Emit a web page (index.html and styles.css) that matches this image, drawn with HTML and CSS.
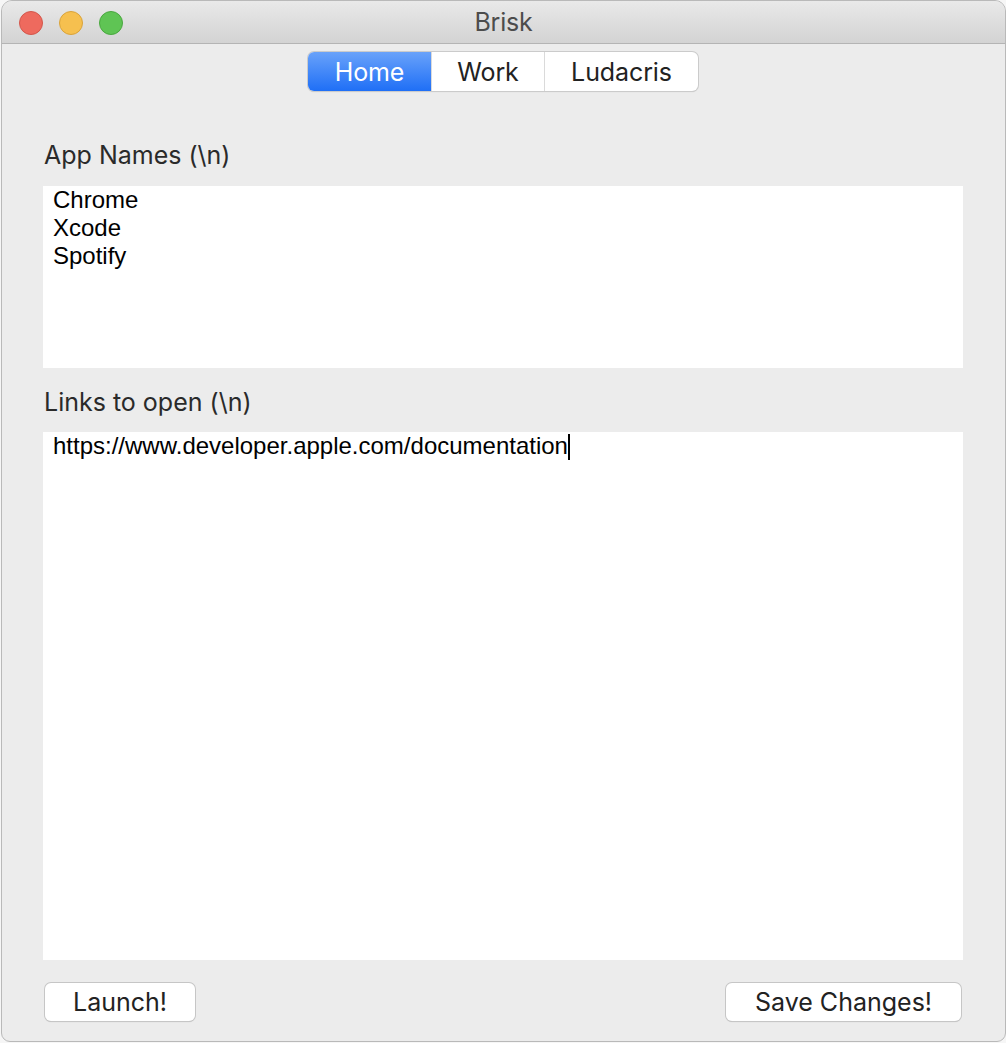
FILE: index.html
```html
<!DOCTYPE html>
<html>
<head>
<meta charset="utf-8">
<title>Brisk</title>
<link rel="stylesheet" href="styles.css">
</head>
<body>
<div class="window">
  <div class="titlebar">
    <div class="lights">
      <span class="light red"></span>
      <span class="light yellow"></span>
      <span class="light green"></span>
    </div>
    <div class="title">Brisk</div>
    <div class="spacer"></div>
  </div>
  <div class="content">
    <div class="segmented">
      <div class="seg seg-home active">Home</div>
      <div class="seg seg-work">Work</div>
      <div class="seg seg-luda">Ludacris</div>
    </div>
    <div class="label label-apps">App Names (\n)</div>
    <div class="field field-apps">
      <div>Chrome</div>
      <div>Xcode</div>
      <div>Spotify</div>
    </div>
    <div class="label label-links">Links to open (\n)</div>
    <div class="field field-links">
      <div>https://www.developer.apple.com/documentation<span class="caret"></span></div>
    </div>
    <div class="actions">
      <div class="btn btn-launch">Launch!</div>
      <div class="btn btn-save">Save Changes!</div>
    </div>
  </div>
</div>
</body>
</html>
```

FILE: styles.css
```css
html, body {
  margin: 0;
  padding: 0;
  background: #f6f6f6;
}

.window {
  box-sizing: border-box;
  width: 1005px;
  height: 1042px;
  border: 1px solid #b9b9b9;
  border-radius: 11px 11px 9px 9px;
  overflow: hidden;
  background: #ececec;
  display: flex;
  flex-direction: column;
  margin-left: 1px;
  font-family: "Inter", "Liberation Sans", sans-serif;
}

.titlebar {
  height: 43px;
  flex: none;
  box-sizing: border-box;
  border-bottom: 1px solid #b4b4b4;
  background: linear-gradient(#e9e9e9, #d3d3d3);
  display: grid;
  grid-template-columns: 1fr auto 1fr;
  align-items: center;
}

.lights {
  display: flex;
  gap: 16px;
  padding-left: 17px;
  padding-top: 1px;
}

.light {
  width: 24px;
  height: 24px;
  box-sizing: border-box;
  border-radius: 50%;
}
.red { background: #ee6a5e; border: 1px solid #d2574c; }
.yellow { background: #f6c04f; border: 1px solid #d9a33b; }
.green { background: #5fc454; border: 1px solid #4aa73f; }

.title {
  font-size: 25px;
  color: #4c4c4c;
  letter-spacing: -0.2px;
}

.content {
  flex: 1;
  padding: 8px 42px 0 41px;
  display: flex;
  flex-direction: column;
}

.segmented {
  align-self: center;
  display: flex;
  height: 39px;
  box-sizing: border-box;
  border-radius: 6px;
  background: #fff;
  box-shadow: 0 0 0 1px #cbcbcb, 0 1px 1px rgba(0,0,0,0.18);
  overflow: hidden;
}

.seg {
  display: flex;
  align-items: center;
  justify-content: center;
  font-size: 25px;
  color: #222;
  letter-spacing: -0.1px;
}
.seg-home { width: 123px; }
.seg-work { width: 112px; border-left: 1px solid #dadada; }
.seg-luda { width: 153px; border-left: 1px solid #dadada; }
.seg.active {
  color: #fff;
  background: linear-gradient(#69a2fa, #1f6ff6);
}

.label {
  font-size: 25px;
  color: #2a2a2a;
  line-height: 30px;
  margin-left: 1px;
}
.label-apps { margin-top: 49px; }
.label-links { margin-top: 19px; }

.field {
  background: #fff;
  font-family: "Liberation Sans", Arial, sans-serif;
  font-size: 24px;
  line-height: 28px;
  color: #000;
  padding: 0 10px;
  box-sizing: border-box;
}
.field-apps { height: 182px; margin-top: 16px; }
.field-links { height: 528px; margin-top: 15px; }

.caret {
  display: inline-block;
  width: 2px;
  height: 26px;
  background: #000;
  vertical-align: -6px;
  margin-left: 0;
}

.actions {
  display: flex;
  justify-content: space-between;
  margin-top: 23px;
}

.btn {
  height: 38px;
  box-sizing: border-box;
  border-radius: 6px;
  background: #fff;
  box-shadow: 0 0 0 1px #c6c6c6, 0 1px 1px rgba(0,0,0,0.2);
  font-size: 25px;
  color: #222;
  display: flex;
  align-items: center;
  justify-content: center;
}
.btn-launch { width: 150px; margin-left: 2px; }
.btn-save { width: 235px; margin-right: 2px; }
```
